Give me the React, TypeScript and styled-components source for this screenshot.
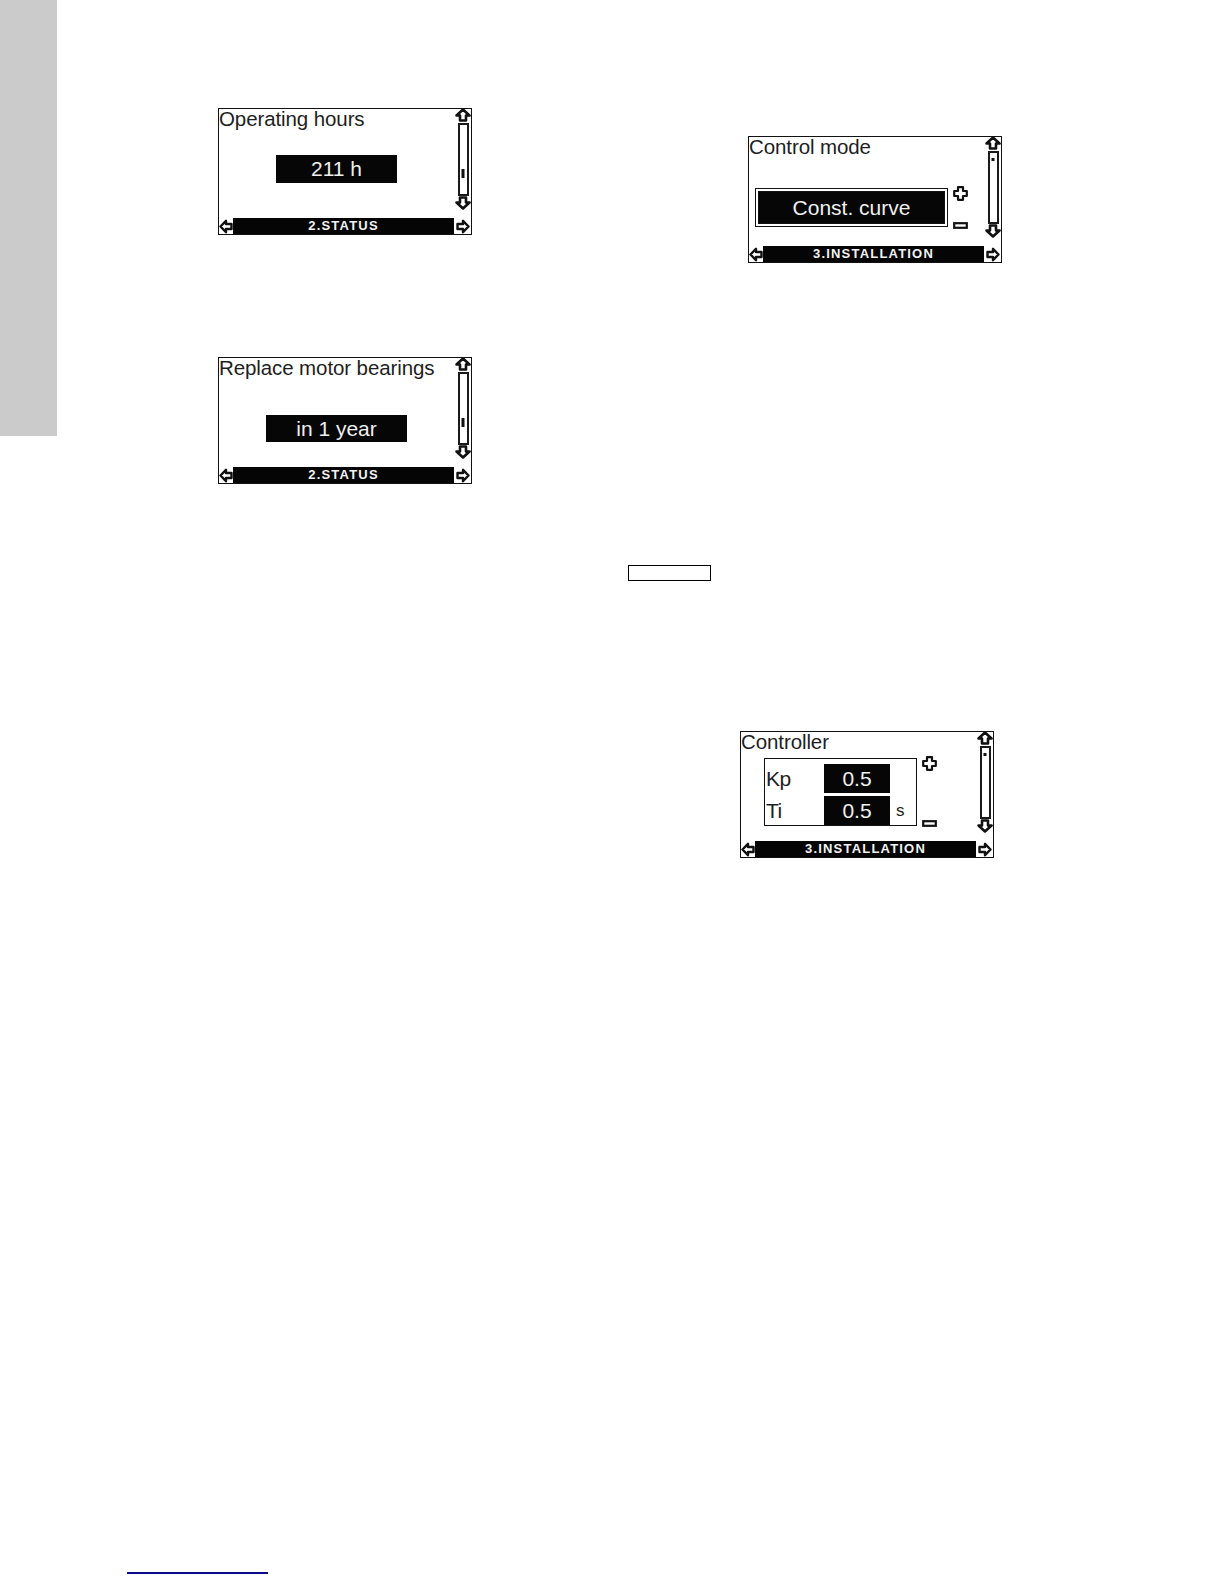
import React from "react";
import styled, { createGlobalStyle } from "styled-components";

const Global = createGlobalStyle`
  html, body { margin: 0; padding: 0; background: #ffffff; }
  body { font-family: "Liberation Sans", Arial, sans-serif; }
  * { box-sizing: border-box; }
`;

const Page = styled.div`
  width: 1224px;
  height: 1584px;
  display: flex;
  overflow: hidden;
  background: #fff;
`;

const Sidebar = styled.div`
  width: 57px;
  height: 436px;
  flex-shrink: 0;
  background: #cbcbcb;
`;

const Main = styled.div`
  flex: 1;
  display: flex;
  flex-direction: column;
  align-items: flex-start;
`;

const TopRow = styled.div`
  display: flex;
  align-items: flex-start;
  padding-top: 108px;
  padding-left: 161px;
`;

const Stack = styled.div<{ $ml?: number; $mt?: number; $gap?: number }>`
  display: flex;
  flex-direction: column;
  gap: ${(p) => p.$gap ?? 0}px;
  margin-left: ${(p) => p.$ml ?? 0}px;
  margin-top: ${(p) => p.$mt ?? 0}px;
`;

const Spaced = styled.div<{ $ml: number; $mt: number }>`
  margin-left: ${(p) => p.$ml}px;
  margin-top: ${(p) => p.$mt}px;
`;

const EmptyBox = styled.div`
  width: 83px;
  height: 16px;
  border: 1.5px solid #000;
`;

const FooterLine = styled.div`
  width: 141px;
  height: 2px;
  background: #0a0a8a;
`;

/* ---------- LCD panel ---------- */

const PanelFrame = styled.div`
  width: 254px;
  height: 127px;
  border: 1px solid #111;
  display: grid;
  grid-template-columns: 1fr 17px;
  grid-template-rows: 1fr 16px;
  background: #fff;
  color: #1e1e1e;
  font-family: "Liberation Sans", Arial, sans-serif;
`;

const MainArea = styled.div`
  grid-column: 1;
  grid-row: 1;
  display: flex;
  flex-direction: column;
  min-width: 0;
`;

const Title = styled.div`
  height: 24px;
  font-size: 20.5px;
  line-height: 20px;
  white-space: nowrap;
  letter-spacing: -0.1px;
`;

const ScrollCol = styled.div`
  grid-column: 2;
  grid-row: 1;
  display: flex;
  flex-direction: column;
  align-items: center;
  margin-top: -1px;
  margin-right: -1px;
`;

const Track = styled.div`
  position: relative;
  width: 11px;
  height: 73px;
  margin: 1px 0 0;
  border: 2px solid #1a1a1a;
`;

const Thumb = styled.div<{ $top: number; $h: number; $w: number }>`
  position: absolute;
  left: 50%;
  transform: translateX(-50%);
  top: ${(p) => p.$top}px;
  width: ${(p) => p.$w}px;
  height: ${(p) => p.$h}px;
  background: #111;
`;

const Bar = styled.div`
  grid-column: 1 / 3;
  grid-row: 2;
  display: flex;
  align-items: stretch;
`;

const BarIcon = styled.div<{ $w: number }>`
  width: ${(p) => p.$w}px;
  display: flex;
  align-items: center;
  justify-content: center;
  flex-shrink: 0;
`;

const BarLabel = styled.div`
  flex: 1;
  background: #050505;
  color: #f2f2f2;
  font-family: "Liberation Sans", Arial, sans-serif;
  font-weight: 700;
  font-size: 13px;
  letter-spacing: 1.2px;
  line-height: 16px;
  text-align: center;
  white-space: nowrap;
`;

const ValueWrap = styled.div<{ $mt: number }>`
  display: flex;
  justify-content: center;
  margin-top: ${(p) => p.$mt}px;
`;

const ValueBox = styled.div<{ $w: number; $h: number }>`
  width: ${(p) => p.$w}px;
  height: ${(p) => p.$h}px;
  background: #060606;
  color: #efefef;
  font-size: 21px;
  line-height: ${(p) => p.$h}px;
  text-align: center;
  white-space: nowrap;
`;

const EditRow = styled.div<{ $mt: number; $ml: number }>`
  display: flex;
  align-items: flex-start;
  gap: 5px;
  margin-top: ${(p) => p.$mt}px;
  margin-left: ${(p) => p.$ml}px;
`;

const SelectBox = styled.div`
  width: 193px;
  height: 39px;
  margin-top: 2px;
  background: #060606;
  border: 1px solid #111;
  box-shadow: inset 0 0 0 2px #fff, inset 0 0 0 3px #111;
  color: #efefef;
  font-size: 21px;
  line-height: 37px;
  text-align: center;
  white-space: nowrap;
`;

const IconCol = styled.div<{ $h: number }>`
  height: ${(p) => p.$h}px;
  display: flex;
  flex-direction: column;
  justify-content: space-between;
`;

const ParamFrame = styled.div`
  width: 153px;
  height: 68px;
  margin-top: 2px;
  border: 1px solid #111;
  padding: 5px 0 0 1px;
  display: grid;
  grid-template-columns: 58px 66px 1fr;
  grid-auto-rows: 29px;
  row-gap: 3px;
  align-items: center;
`;

const ParamLabel = styled.div`
  font-size: 21px;
  line-height: 29px;
  letter-spacing: -0.5px;
`;

const ParamValue = styled.div`
  height: 29px;
  background: #060606;
  color: #efefef;
  font-size: 21px;
  line-height: 29px;
  text-align: center;
`;

const ParamUnit = styled.div`
  font-size: 17px;
  padding-left: 6px;
  line-height: 29px;
`;

/* ---------- icons ---------- */

const UpArrow = () => (
  <svg width="16" height="14" viewBox="0 0 16 14">
    <path d="M8 1.5 L14.5 7.5 L11 7.5 L11 12.5 L5 12.5 L5 7.5 L1.5 7.5 Z" fill="#fff" stroke="#111" strokeWidth="2.6" strokeLinejoin="round" />
  </svg>
);

const DownArrow = () => (
  <svg width="16" height="14" viewBox="0 0 16 14">
    <path d="M8 12.5 L14.5 6.5 L11 6.5 L11 1.5 L5 1.5 L5 6.5 L1.5 6.5 Z" fill="#fff" stroke="#111" strokeWidth="2.6" strokeLinejoin="round" />
  </svg>
);

const LeftArrow = () => (
  <svg width="14" height="15" viewBox="0 0 14 15">
    <path d="M1.5 7.5 L7 1.8 L7 5 L12.5 5 L12.5 10 L7 10 L7 13.2 Z" fill="#fff" stroke="#111" strokeWidth="2.4" strokeLinejoin="round" />
  </svg>
);

const RightArrow = () => (
  <svg width="15" height="15" viewBox="0 0 15 15">
    <path d="M13.5 7.5 L8 1.8 L8 5 L2.5 5 L2.5 10 L8 10 L8 13.2 Z" fill="#fff" stroke="#111" strokeWidth="2.4" strokeLinejoin="round" />
  </svg>
);

const PlusIcon = () => (
  <svg width="15" height="15" viewBox="0 0 15 15">
    <path d="M5 1.2 H10 V5 H13.8 V10 H10 V13.8 H5 V10 H1.2 V5 H5 Z" fill="#fff" stroke="#111" strokeWidth="2.2" strokeLinejoin="round" />
  </svg>
);

const MinusIcon = () => (
  <svg width="15" height="7" viewBox="0 0 15 7">
    <rect x="1.2" y="1.2" width="12.6" height="4.6" fill="#fff" stroke="#111" strokeWidth="2.2" />
  </svg>
);

/* ---------- composed panel ---------- */

type PanelProps = {
  title: string;
  menu: string;
  thumb: { top: number; h: number; w: number };
  children: React.ReactNode;
};

const Panel = ({ title, menu, thumb, children }: PanelProps) => (
  <PanelFrame>
    <MainArea>
      <Title>{title}</Title>
      {children}
    </MainArea>
    <ScrollCol>
      <UpArrow />
      <Track>
        <Thumb $top={thumb.top} $h={thumb.h} $w={thumb.w} />
      </Track>
      <DownArrow />
    </ScrollCol>
    <Bar>
      <BarIcon $w={14}>
        <LeftArrow />
      </BarIcon>
      <BarLabel>{menu}</BarLabel>
      <BarIcon $w={17}>
        <RightArrow />
      </BarIcon>
    </Bar>
  </PanelFrame>
);

const statusThumb = { top: 44, h: 9, w: 3 };
const installThumb = { top: 5, h: 3, w: 3 };

export default function App() {
  return (
    <>
      <Global />
      <Page>
        <Sidebar />
        <Main>
          <TopRow>
            <Stack $gap={122}>
              <Panel title="Operating hours" menu="2.STATUS" thumb={statusThumb}>
                <ValueWrap $mt={22}>
                  <ValueBox $w={121} $h={28}>211 h</ValueBox>
                </ValueWrap>
              </Panel>
              <Panel title="Replace motor bearings" menu="2.STATUS" thumb={statusThumb}>
                <ValueWrap $mt={33}>
                  <ValueBox $w={141} $h={27}>in 1 year</ValueBox>
                </ValueWrap>
              </Panel>
            </Stack>
            <Stack $ml={276} $mt={28}>
              <Panel title="Control mode" menu="3.INSTALLATION" thumb={installThumb}>
                <EditRow $mt={25} $ml={6}>
                  <SelectBox>Const. curve</SelectBox>
                  <IconCol $h={43}>
                    <PlusIcon />
                    <MinusIcon />
                  </IconCol>
                </EditRow>
              </Panel>
            </Stack>
          </TopRow>
          <Spaced $ml={571} $mt={81}>
            <EmptyBox />
          </Spaced>
          <Spaced $ml={683} $mt={150}>
            <Panel title="Controller" menu="3.INSTALLATION" thumb={installThumb}>
              <EditRow $mt={0} $ml={23}>
                <ParamFrame>
                  <ParamLabel>Kp</ParamLabel>
                  <ParamValue>0.5</ParamValue>
                  <span />
                  <ParamLabel>Ti</ParamLabel>
                  <ParamValue>0.5</ParamValue>
                  <ParamUnit>s</ParamUnit>
                </ParamFrame>
                <IconCol $h={71}>
                  <PlusIcon />
                  <MinusIcon />
                </IconCol>
              </EditRow>
            </Panel>
          </Spaced>
          <Spaced $ml={70} $mt={714}>
            <FooterLine />
          </Spaced>
        </Main>
      </Page>
    </>
  );
}
